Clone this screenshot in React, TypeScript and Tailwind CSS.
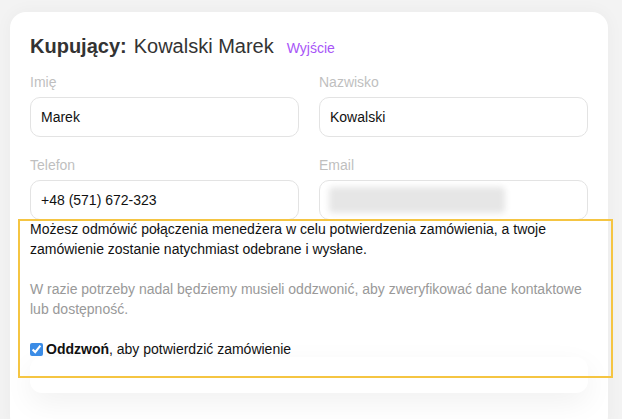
import React from 'react';

const FONT = { fontFamily: '"Liberation Sans", Arial, sans-serif' };

function Field({ label, value, blurred }: { label: string; value?: string; blurred?: boolean }) {
  return (
    <div className="flex flex-col">
      <span className="text-sm leading-5 text-[#bfbfbf]">{label}</span>
      <div className="mt-[5px] h-10 rounded-[10px] border border-[#e3e3e3] px-[10px] flex items-center text-sm text-[#111]">
        {blurred ? (
          <div className="h-[26px] w-[176px] -ml-px rounded bg-[#e6e6e6] blur-[3px]" />
        ) : (
          value
        )}
      </div>
    </div>
  );
}

export default function App() {
  return (
    <div className="relative min-h-screen bg-[#f3f3f3] pt-3 pl-[10px] overflow-hidden" style={FONT}>
      {/* Card */}
      <div className="w-[598px] h-[420px] rounded-2xl bg-white px-5 pt-5 shadow-[0_0_18px_rgba(0,0,0,0.04)]">
        <div className="flex items-baseline h-7 text-[#333]">
          <span className="text-xl font-bold">Kupujący:</span>
          <span className="text-xl ml-[7px]">Kowalski Marek</span>
          <span className="text-sm text-[#a855f7] ml-[13px]">Wyjście</span>
        </div>

        <div className="mt-3 grid grid-cols-2 gap-x-5 gap-y-[18px]">
          <Field label="Imię" value="Marek" />
          <Field label="Nazwisko" value="Kowalski" />
          <Field label="Telefon" value="+48 (571) 672-323" />
          <Field label="Email" blurred />
        </div>

        <div className="text-sm leading-5 -mt-px">
          <p className="text-[#111]">
            Możesz odmówić połączenia menedżera w celu potwierdzenia zamówienia, a twoje zamówienie zostanie natychmiast odebrane i wysłane.
          </p>
          <p className="mt-5 text-[#999]">
            W razie potrzeby nadal będziemy musieli oddzwonić, aby zweryfikować dane kontaktowe lub dostępność.
          </p>
          <label className="mt-5 flex items-center gap-[3px] text-[#111]">
            <input type="checkbox" defaultChecked className="w-[13px] h-[13px] accent-[#3b8ce6]" />
            <span>
              <b>Oddzwoń</b>, aby potwierdzić zamówienie
            </span>
          </label>
        </div>

        <div className="-mt-0.5 h-9 rounded-xl bg-white shadow-[0_10px_30px_rgba(0,0,0,0.06)]" />
      </div>

      {/* Highlight outline */}
      <div className="absolute left-[18px] top-[219px] w-[595px] h-[159px] border-2 border-[#f5c542] pointer-events-none" />
    </div>
  );
}
